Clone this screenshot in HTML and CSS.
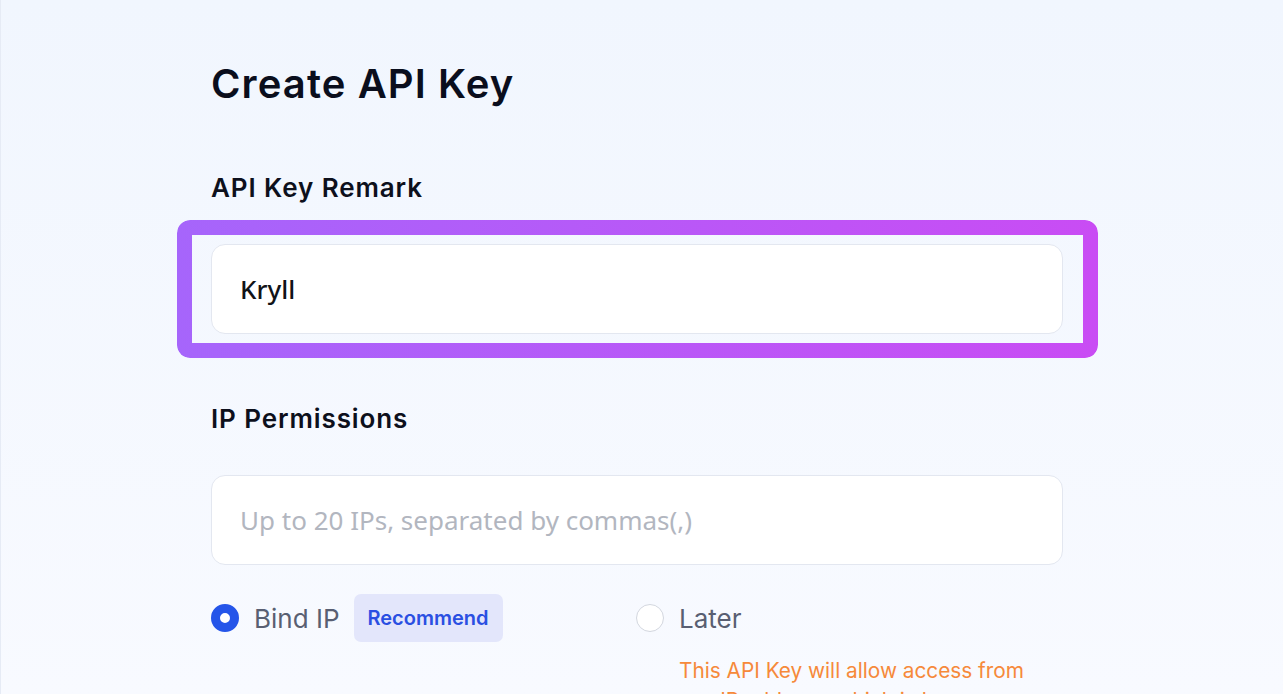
FILE: index.html
```html
<!DOCTYPE html>
<html lang="en">
<head>
<meta charset="utf-8">
<title>Create API Key</title>
<link rel="stylesheet" href="styles.css">
</head>
<body>
<main class="page">
  <h1 class="title">Create API Key</h1>

  <section class="section remark">
    <h2 class="label">API Key Remark</h2>
    <div class="field-wrap">
      <div class="field field-value">Kryll</div>
      <div class="highlight"></div>
    </div>
  </section>

  <section class="section ip">
    <h2 class="label">IP Permissions</h2>
    <div class="field field-placeholder">Up to 20 IPs, separated by commas(,)</div>
    <div class="options">
      <div class="option">
        <div class="option-row">
          <span class="radio radio-checked"></span>
          <span class="option-text">Bind IP</span>
          <span class="badge">Recommend</span>
        </div>
      </div>
      <div class="option">
        <div class="option-row">
          <span class="radio"></span>
          <span class="option-text">Later</span>
        </div>
        <p class="warning">This API Key will allow access from any IP address, which is less secure.</p>
      </div>
    </div>
  </section>
</main>
</body>
</html>
```

FILE: styles.css
```css
* { box-sizing: border-box; }

html, body {
  margin: 0;
  padding: 0;
  height: 100%;
}

body {
  background: linear-gradient(180deg, #f1f6fe 0%, #f8faff 100%);
  border-left: 1px solid #e6ebf5;
  font-family: Inter, "Noto Sans", sans-serif;
  overflow: hidden;
}

.page {
  padding: 61px 0 0 210px;
  width: 1062px;
}

.title {
  margin: 0;
  font-size: 40px;
  line-height: 46px;
  font-weight: 600;
  color: #0a0e1d;
  letter-spacing: 1.1px;
}

.label {
  margin: 0;
  font-size: 26px;
  line-height: 32px;
  font-weight: 600;
  color: #0d101c;
  letter-spacing: 0.9px;
}

.remark { margin-top: 65px; }
.remark .label { margin-bottom: 40px; }

.ip { margin-top: 69px; }
.ip .label { margin-bottom: 40px; }

.field-wrap {
  position: relative;
}

.field {
  height: 90px;
  background: #ffffff;
  border: 1px solid #e3e7f0;
  border-radius: 14px;
  padding: 0 28px;
  display: flex;
  align-items: center;
  font-family: "Noto Sans", "Open Sans", sans-serif;
  font-size: 26px;
}

.field-value {
  color: #111318;
  font-weight: 500;
}

.field-placeholder {
  color: #b2b6bf;
}

.highlight {
  position: absolute;
  top: -24px;
  bottom: -24px;
  left: -34px;
  right: -35px;
  border: 15px solid transparent;
  border-radius: 13px;
  background: linear-gradient(90deg, #a665fb, #c94cf4) border-box;
  -webkit-mask: linear-gradient(#000 0 0) padding-box, linear-gradient(#000 0 0);
  -webkit-mask-composite: xor;
  mask-composite: exclude;
  pointer-events: none;
}

.options {
  margin-top: 29px;
  display: grid;
  grid-template-columns: 425px 425px;
}

.option-row {
  display: flex;
  align-items: center;
  height: 48px;
}

.radio {
  width: 28px;
  height: 28px;
  border-radius: 50%;
  border: 1px solid #d3d7df;
  background: #ffffff;
  flex: none;
}

.radio-checked {
  border: 9px solid #2555e9;
  background: #ffffff;
}

.option-text {
  margin-left: 15px;
  font-size: 26px;
  color: #595f72;
}

.badge {
  margin-left: 14px;
  height: 48px;
  padding: 0 14px;
  display: flex;
  align-items: center;
  background: #e3e6fb;
  border-radius: 7px;
  color: #2a4fe2;
  font-size: 20px;
  font-weight: 600;
}

.warning {
  margin: 14px 0 0 43px;
  max-width: 370px;
  font-size: 20.8px;
  line-height: 30px;
  color: #f6893a;
}
```
